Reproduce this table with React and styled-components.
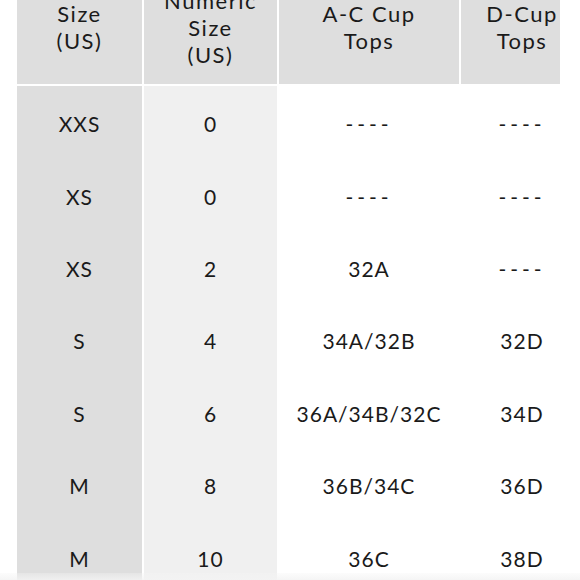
import React from 'react'
import styled, { createGlobalStyle } from 'styled-components'

const rows = [
  ['XXS', '0', '----', '----'],
  ['XS', '0', '----', '----'],
  ['XS', '2', '32A', '----'],
  ['S', '4', '34A/32B', '32D'],
  ['S', '6', '36A/34B/32C', '34D'],
  ['M', '8', '36B/34C', '36D'],
  ['M', '10', '36C', '38D'],
]

const heads = [
  ['Size', '(US)'],
  ['Numeric', 'Size', '(US)'],
  ['A-C Cup', 'Tops'],
  ['D-Cup', 'Tops'],
]

const bodyBg = ['#dedede', '#f0f0f0', '#ffffff', '#ffffff']

const App = () => {
  return (
    <Page>
      <GlobalStyle />
      <Scroller>
        <Chart>
          {heads.map((lines, i) => (
            <HeadCell key={'h' + i}>
              {lines.map((l) => (
                <span key={l}>{l}</span>
              ))}
            </HeadCell>
          ))}
          {rows.map((r, ri) =>
            r.map((v, ci) => (
              <Cell key={ri + '-' + ci} $bg={bodyBg[ci]} $dash={v === '----'}>
                {v}
              </Cell>
            ))
          )}
        </Chart>
      </Scroller>
      <BottomFade />
    </Page>
  )
}

export default App

const GlobalStyle = createGlobalStyle`
  html, body {
    margin: 0;
    padding: 0;
    background: #fff;
    overflow: hidden;
  }
`

const Page = styled.div`
  position: relative;
  width: 580px;
  height: 580px;
  overflow: hidden;
  font-family: Lato, "Open Sans", sans-serif;
  font-weight: 400;
  color: #1a1a1a;
`

const Scroller = styled.div`
  margin-top: -30px;
  margin-left: 17px;
  width: 543px;
  overflow: hidden;
`

const Chart = styled.div`
  display: grid;
  grid-template-columns: 125px 133px 180px 122px;
  column-gap: 2px;
  width: max-content;
  background: #fff;
`

const HeadCell = styled.div`
  height: 114px;
  margin-bottom: 2px;
  background: #dedede;
  display: flex;
  flex-direction: column;
  justify-content: center;
  align-items: center;
  font-size: 22px;
  line-height: 27px;
  letter-spacing: 1.5px;
  white-space: nowrap;
`

const Cell = styled.div`
  height: 72.4px;
  background: ${(p) => p.$bg};
  display: flex;
  align-items: center;
  justify-content: center;
  padding-top: 3px;
  box-sizing: border-box;
  font-size: 21px;
  letter-spacing: ${(p) => (p.$dash ? '4px' : '1px')};
  white-space: nowrap;
`

const BottomFade = styled.div`
  position: absolute;
  left: 0;
  right: 0;
  bottom: 0;
  height: 7px;
  background: linear-gradient(to bottom, rgba(245, 245, 245, 0.3), rgba(243, 243, 243, 0.85));
`
